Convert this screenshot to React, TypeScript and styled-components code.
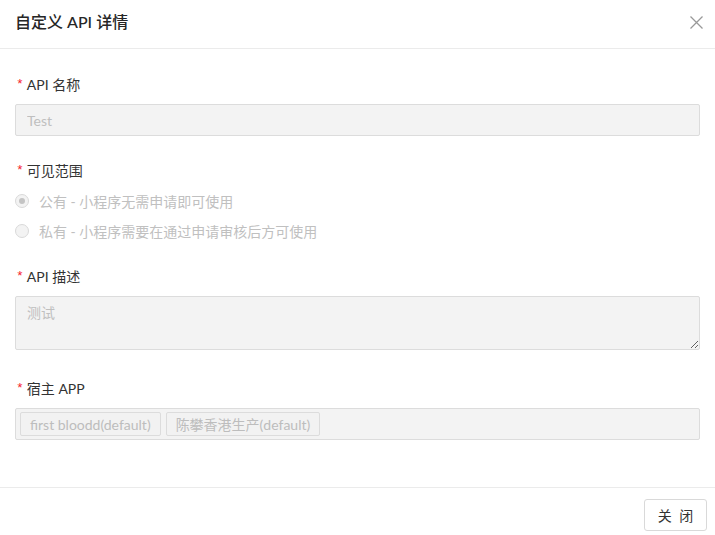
import React from "react";
import styled, { createGlobalStyle } from "styled-components";

const Global = createGlobalStyle`
  html, body { margin: 0; padding: 0; background: #fff; }
  body { font-family: "Lato", "Noto Sans CJK SC", sans-serif; color: #333; }
  * { box-sizing: border-box; }
`;

const Dialog = styled.div`
  width: 715px;
  height: 535px;
  display: flex;
  flex-direction: column;
  background: #fff;
`;

const Header = styled.div`
  height: 49px;
  display: flex;
  align-items: center;
  justify-content: space-between;
  padding: 0 12px 4px 15px;
  border-bottom: 1px solid #ebebeb;
`;

const Title = styled.div`
  font-size: 16px;
  font-weight: 500;
  color: #262626;
  line-height: 22px;
`;

const CloseBtn = styled.button`
  border: none;
  background: none;
  padding: 0;
  width: 14px;
  height: 14px;
  display: flex;
  align-items: center;
  justify-content: center;
  cursor: pointer;
`;

const Body = styled.div`
  flex: 1;
  padding: 25px 15px 0 15px;
  display: flex;
  flex-direction: column;
  gap: 24px;
`;

const Item = styled.div<{ $extra?: number }>`
  display: flex;
  flex-direction: column;
  gap: 8px;
  margin-bottom: ${(p) => p.$extra ?? 0}px;
`;

const Label = styled.div`
  font-size: 14px;
  line-height: 22px;
  color: #333;
  display: flex;
  align-items: center;
`;

const Star = styled.span`
  color: #f5222d;
  font-family: "Liberation Mono", monospace;
  font-size: 13px;
  margin-right: 3px;
  margin-left: 1px;
`;

const Input = styled.input`
  width: 100%;
  height: 32px;
  border: 1px solid #dcdcdc;
  border-radius: 2px;
  background: #f3f3f3;
  padding: 0 11px;
  font-family: inherit;
  font-size: 14px;
  color: #bfbfbf;
  outline: none;
  &:disabled { color: #bfbfbf; }
`;

const TextArea = styled.textarea`
  display: block;
  width: 100%;
  height: 54px;
  border: 1px solid #dcdcdc;
  border-radius: 2px;
  background: #f3f3f3;
  padding: 5px 11px;
  font-family: inherit;
  font-size: 14px;
  line-height: 22px;
  color: #bfbfbf;
  resize: vertical;
  outline: none;
  &:disabled { color: #bfbfbf; }
`;

const RadioGroup = styled.div`
  display: flex;
  flex-direction: column;
  gap: 8px;
`;

const RadioRow = styled.label`
  display: flex;
  align-items: center;
  gap: 10px;
  height: 22px;
  font-size: 14px;
  color: #c0c0c0;
`;

const RadioCircle = styled.span<{ $checked?: boolean }>`
  width: 14px;
  height: 14px;
  border-radius: 50%;
  border: 1px solid #d9d9d9;
  background: #f3f3f3;
  display: flex;
  align-items: center;
  justify-content: center;
  &::after {
    content: "";
    display: ${(p) => (p.$checked ? "block" : "none")};
    width: 6px;
    height: 6px;
    border-radius: 50%;
    background: #c4c4c4;
  }
`;

const TagBox = styled.div`
  height: 32px;
  border: 1px solid #dcdcdc;
  border-radius: 2px;
  background: #f3f3f3;
  display: flex;
  align-items: center;
  gap: 5px;
  padding: 0 4px;
`;

const Tag = styled.span`
  height: 24px;
  display: flex;
  align-items: center;
  padding: 0 9px;
  border: 1px solid #dcdcdc;
  border-radius: 2px;
  background: #f2f2f2;
  font-size: 14px;
  color: #bdbdbd;
`;

const Footer = styled.div`
  border-top: 1px solid #ebebeb;
  padding: 11px 8px 4px 15px;
  display: flex;
  justify-content: flex-end;
`;

const Button = styled.button`
  width: 63px;
  height: 32px;
  border: 1px solid #d9d9d9;
  border-radius: 3px;
  background: #fff;
  font-family: inherit;
  font-size: 14px;
  color: #333;
  letter-spacing: 2px;
  padding: 0 0 0 2px;
  cursor: pointer;
`;

const CloseIcon = () => (
  <svg width="13" height="13" viewBox="0 0 13 13">
    <path d="M0.5 0.5 L12.5 12.5 M12.5 0.5 L0.5 12.5" stroke="#999" strokeWidth="1.3" />
  </svg>
);

export default function App() {
  return (
    <>
      <Global />
      <Dialog>
        <Header>
          <Title>自定义 API 详情</Title>
          <CloseBtn aria-label="close">
            <CloseIcon />
          </CloseBtn>
        </Header>
        <Body>
          <Item>
            <Label>
              <Star>*</Star>API 名称
            </Label>
            <Input disabled value="Test" readOnly />
          </Item>
          <Item>
            <Label>
              <Star>*</Star>可见范围
            </Label>
            <RadioGroup>
              <RadioRow>
                <RadioCircle $checked />
                公有 - 小程序无需申请即可使用
              </RadioRow>
              <RadioRow>
                <RadioCircle />
                私有 - 小程序需要在通过申请审核后方可使用
              </RadioRow>
            </RadioGroup>
          </Item>
          <Item $extra={4}>
            <Label>
              <Star>*</Star>API 描述
            </Label>
            <TextArea disabled value="测试" readOnly />
          </Item>
          <Item>
            <Label>
              <Star>*</Star>宿主 APP
            </Label>
            <TagBox>
              <Tag>first bloodd(default)</Tag>
              <Tag>陈攀香港生产(default)</Tag>
            </TagBox>
          </Item>
        </Body>
        <Footer>
          <Button>关 闭</Button>
        </Footer>
      </Dialog>
    </>
  );
}
